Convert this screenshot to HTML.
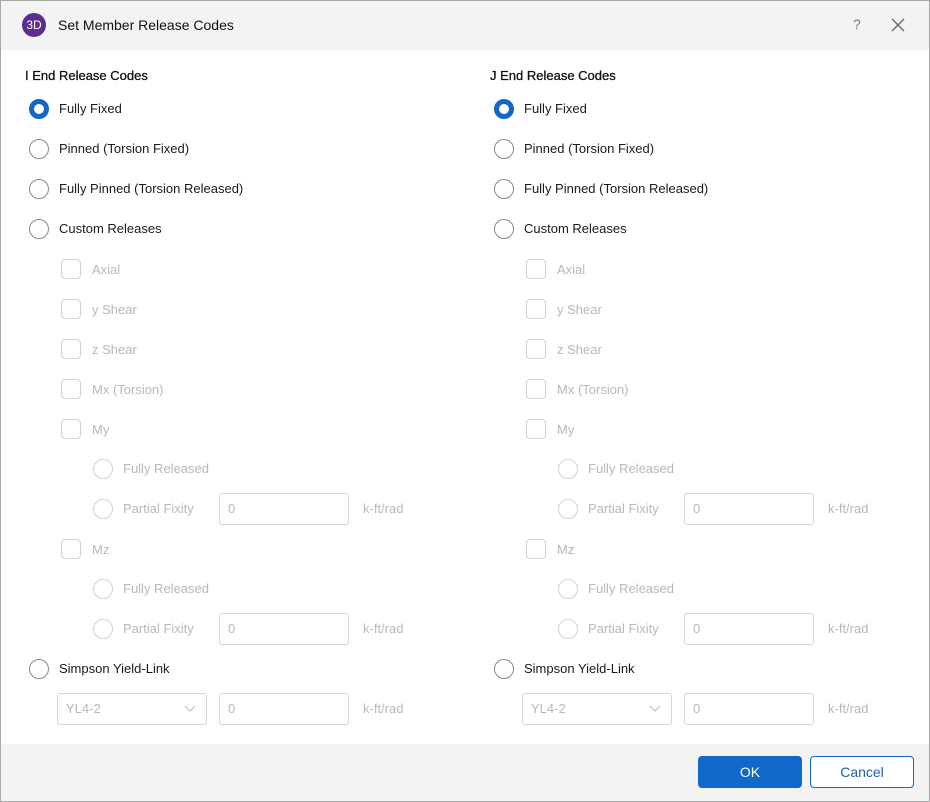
<!DOCTYPE html>
<html><head><meta charset="utf-8"><style>
*{box-sizing:border-box;margin:0;padding:0}
body{width:930px;height:802px;background:#fff;font-family:"Liberation Sans",sans-serif;font-size:13px;color:#1a1a1a;position:relative;overflow:hidden}
.frame{position:absolute;left:0;top:0;width:930px;height:802px;border:1px solid #a8a8a8}
.title{position:absolute;left:1px;top:1px;width:928px;height:49px;background:#f3f3f3}
.foot{position:absolute;left:1px;top:744px;width:928px;height:57px;background:#f3f3f3}
.a{position:absolute;white-space:nowrap}
.col{position:absolute;top:0;width:465px;height:802px}
.r{position:absolute;width:20px;height:20px;border:1px solid #8a8a8a;border-radius:50%;background:#fff}
.r.on{border:5px solid #1168c8}
.r.dis,.c{border-color:#d2d2d2}
.c{position:absolute;width:20px;height:20px;border:1px solid #d2d2d2;border-radius:4px}
.t{position:absolute;line-height:16px}
.g{color:#b8b8b8}
.in{position:absolute;width:130px;height:32px;border:1px solid #d6d6d6;border-radius:3px;color:#b8b8b8;padding:7px 8px;line-height:16px}
.h{position:absolute;font-weight:normal;color:#111;-webkit-text-stroke:0.3px #111}
</style></head><body>
<div class="frame"></div>
<div class="title"></div>
<div class="a" style="left:22px;top:13px;width:24px;height:24px;border-radius:50%;background:#5b2d8e;color:#fff;font-size:12px;line-height:24px;text-align:center">3D</div>
<div class="a" style="left:58px;top:17px;font-size:14px;color:#111">Set Member Release Codes</div>
<div class="a" style="left:853px;top:16px;color:#777;font-size:14px">?</div>
<svg class="a" style="left:891px;top:18px" width="14" height="14"><path d="M1 1L13 13M13 1L1 13" stroke="#666" stroke-width="1.3"/></svg>

<div class="col" style="left:0">
<div class="h t" style="left:25px;top:68px">I End Release Codes</div>
<div class="r on" style="left:29px;top:99px"></div><div class="t" style="left:59px;top:101px">Fully Fixed</div>
<div class="r" style="left:29px;top:139px"></div><div class="t" style="left:59px;top:141px">Pinned (Torsion Fixed)</div>
<div class="r" style="left:29px;top:179px"></div><div class="t" style="left:59px;top:181px">Fully Pinned (Torsion Released)</div>
<div class="r" style="left:29px;top:219px"></div><div class="t" style="left:59px;top:221px">Custom Releases</div>
<div class="c" style="left:61px;top:259px"></div><div class="t g" style="left:92px;top:262px">Axial</div>
<div class="c" style="left:61px;top:299px"></div><div class="t g" style="left:92px;top:302px">y Shear</div>
<div class="c" style="left:61px;top:339px"></div><div class="t g" style="left:92px;top:342px">z Shear</div>
<div class="c" style="left:61px;top:379px"></div><div class="t g" style="left:92px;top:382px">Mx (Torsion)</div>
<div class="c" style="left:61px;top:419px"></div><div class="t g" style="left:92px;top:422px">My</div>
<div class="r dis" style="left:93px;top:459px"></div><div class="t g" style="left:123px;top:461px">Fully Released</div>
<div class="r dis" style="left:93px;top:499px"></div><div class="t g" style="left:123px;top:501px">Partial Fixity</div>
<div class="in" style="left:219px;top:493px">0</div><div class="t g" style="left:363px;top:501px">k-ft/rad</div>
<div class="c" style="left:61px;top:539px"></div><div class="t g" style="left:92px;top:542px">Mz</div>
<div class="r dis" style="left:93px;top:579px"></div><div class="t g" style="left:123px;top:581px">Fully Released</div>
<div class="r dis" style="left:93px;top:619px"></div><div class="t g" style="left:123px;top:621px">Partial Fixity</div>
<div class="in" style="left:219px;top:613px">0</div><div class="t g" style="left:363px;top:621px">k-ft/rad</div>
<div class="r" style="left:29px;top:659px"></div><div class="t" style="left:59px;top:661px">Simpson Yield-Link</div>
<div class="in" style="left:57px;top:693px;width:150px">YL4-2</div>
<svg class="a" style="left:184px;top:705px" width="12" height="8"><path d="M1 1L6 6L11 1" stroke="#bbb" fill="none"/></svg>
<div class="in" style="left:219px;top:693px">0</div><div class="t g" style="left:363px;top:701px">k-ft/rad</div>
</div>

<div class="col" style="left:465px">
<div class="h t" style="left:25px;top:68px">J End Release Codes</div>
<div class="r on" style="left:29px;top:99px"></div><div class="t" style="left:59px;top:101px">Fully Fixed</div>
<div class="r" style="left:29px;top:139px"></div><div class="t" style="left:59px;top:141px">Pinned (Torsion Fixed)</div>
<div class="r" style="left:29px;top:179px"></div><div class="t" style="left:59px;top:181px">Fully Pinned (Torsion Released)</div>
<div class="r" style="left:29px;top:219px"></div><div class="t" style="left:59px;top:221px">Custom Releases</div>
<div class="c" style="left:61px;top:259px"></div><div class="t g" style="left:92px;top:262px">Axial</div>
<div class="c" style="left:61px;top:299px"></div><div class="t g" style="left:92px;top:302px">y Shear</div>
<div class="c" style="left:61px;top:339px"></div><div class="t g" style="left:92px;top:342px">z Shear</div>
<div class="c" style="left:61px;top:379px"></div><div class="t g" style="left:92px;top:382px">Mx (Torsion)</div>
<div class="c" style="left:61px;top:419px"></div><div class="t g" style="left:92px;top:422px">My</div>
<div class="r dis" style="left:93px;top:459px"></div><div class="t g" style="left:123px;top:461px">Fully Released</div>
<div class="r dis" style="left:93px;top:499px"></div><div class="t g" style="left:123px;top:501px">Partial Fixity</div>
<div class="in" style="left:219px;top:493px">0</div><div class="t g" style="left:363px;top:501px">k-ft/rad</div>
<div class="c" style="left:61px;top:539px"></div><div class="t g" style="left:92px;top:542px">Mz</div>
<div class="r dis" style="left:93px;top:579px"></div><div class="t g" style="left:123px;top:581px">Fully Released</div>
<div class="r dis" style="left:93px;top:619px"></div><div class="t g" style="left:123px;top:621px">Partial Fixity</div>
<div class="in" style="left:219px;top:613px">0</div><div class="t g" style="left:363px;top:621px">k-ft/rad</div>
<div class="r" style="left:29px;top:659px"></div><div class="t" style="left:59px;top:661px">Simpson Yield-Link</div>
<div class="in" style="left:57px;top:693px;width:150px">YL4-2</div>
<svg class="a" style="left:184px;top:705px" width="12" height="8"><path d="M1 1L6 6L11 1" stroke="#bbb" fill="none"/></svg>
<div class="in" style="left:219px;top:693px">0</div><div class="t g" style="left:363px;top:701px">k-ft/rad</div>
</div>

<div class="foot"></div>
<div class="a" style="left:698px;top:756px;width:104px;height:32px;background:#1168c8;border-radius:4px;color:#fff;text-align:center;line-height:32px;font-size:14px">OK</div>
<div class="a" style="left:810px;top:756px;width:104px;height:32px;background:#fff;border:1px solid #1168c8;border-radius:4px;color:#1a5fb4;text-align:center;line-height:30px;font-size:14px">Cancel</div>
</body></html>
